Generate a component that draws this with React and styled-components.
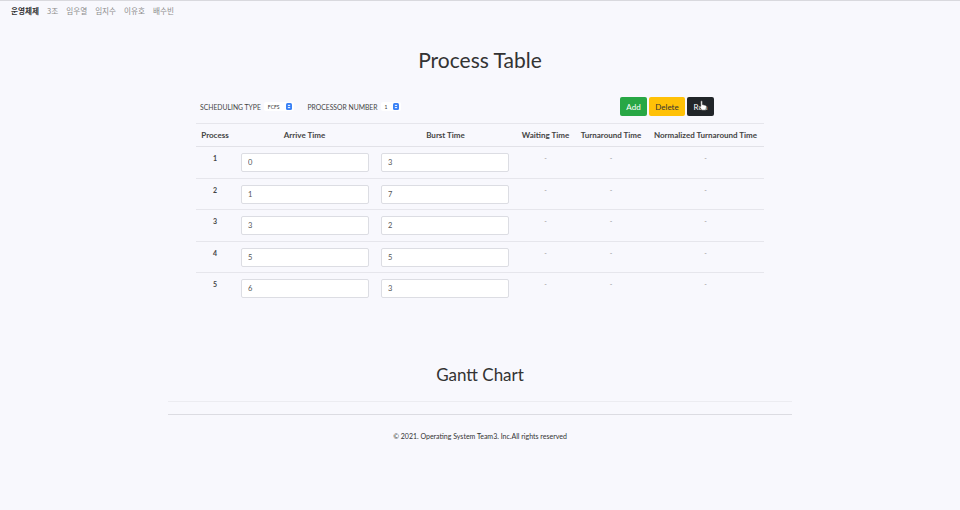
import React from "react";
import styled, { createGlobalStyle } from "styled-components";

const Global = createGlobalStyle`
  html, body { margin: 0; padding: 0; background: #f8f8fd; }
  body { font-family: Lato, "Noto Sans", "Noto Sans CJK KR", sans-serif; color: #333; }
  * { box-sizing: border-box; }
`;

const Page = styled.div`
  width: 960px;
  min-height: 510px;
  border-top: 1px solid #d9d9de;
  display: flex;
  flex-direction: column;
  align-items: center;
`;

const Nav = styled.nav`
  align-self: stretch;
  display: flex;
  gap: 8px;
  padding: 4px 0 0 11px;
  height: 20px;
  font-family: "Noto Sans CJK KR", sans-serif;
  font-size: 7.6px;
  line-height: 12px;
`;

const NavItem = styled.span`
  color: ${(p) => (p.$brand ? "#333" : "#8c8c8c")};
  font-weight: ${(p) => (p.$brand ? 700 : 400)};
`;

const Title = styled.h1`
  margin: 24px 0 0;
  font-size: 21px;
  line-height: 30px;
  font-weight: 400;
  color: #333;
`;

const Section = styled.section`
  width: 568px;
  display: flex;
  flex-direction: column;
`;

const Controls = styled.div`
  margin-top: 22px;
  height: 26px;
  display: flex;
  align-items: center;
  justify-content: space-between;
  padding: 0 50px 7px 4px;
`;

const Group = styled.div`
  display: flex;
  align-items: center;
`;

const Label = styled.span`
  font-size: 6.8px;
  color: #444;
  text-transform: uppercase;
  margin-right: 3px;
  margin-left: ${(p) => p.$ml || 0}px;
`;

const SelectBox = styled.div`
  height: 9px;
  display: flex;
  align-items: center;
  gap: ${(p) => p.$gap}px;
  background: #fff;
  border-radius: 2px;
  padding: 0 2px 0 4px;
  font-size: 5px;
  color: #333;
`;

const Spin = styled.span`
  width: 6px;
  height: 7px;
  background: #3b82f6;
  border-radius: 1.5px;
  display: flex;
  align-items: center;
  justify-content: center;
`;

const Buttons = styled.div`
  display: flex;
  gap: 2px;
`;

const Button = styled.button`
  height: 19px;
  width: ${(p) => p.$w}px;
  padding: 0;
  border: none;
  border-radius: 2px;
  font-family: inherit;
  font-size: 8px;
  background: ${(p) => p.$bg};
  color: ${(p) => p.$fg};
  cursor: pointer;
  position: relative;
`;

const Cursor = styled.svg`
  position: absolute;
  left: 12px;
  top: 3px;
`;

const Table = styled.table`
  width: 568px;
  border-collapse: collapse;
  table-layout: fixed;
`;

const Th = styled.th`
  height: 23px;
  border-top: 1px solid #e6e6ec;
  border-bottom: 1px solid #e2e2e8;
  font-size: 8px;
  font-weight: 700;
  color: #444;
  text-align: center;
  padding: 0;
  white-space: nowrap;
`;

const Td = styled.td`
  border-top: ${(p) => (p.$first ? "none" : "1px solid #e6e6ec")};
  padding: 6px 0 5.6px;
  vertical-align: top;
  text-align: center;
  font-size: 7px;
  line-height: 10px;
  font-weight: ${(p) => (p.$bold ? 700 : 400)};
  color: ${(p) => (p.$muted ? "#999" : "#444")};
`;

const Input = styled.input`
  display: block;
  width: 128px;
  height: 19px;
  margin: 0;
  margin-left: ${(p) => (p.$left ? 7 : 6)}px;
  border: 1px solid #dcdde3;
  border-radius: 2px;
  background: #fff;
  padding: 0 6px;
  font-family: inherit;
  font-size: 7.5px;
  color: #555;
  outline: none;
`;

const Gantt = styled.h2`
  margin: 59px 0 0;
  font-size: 17px;
  line-height: 24px;
  font-weight: 400;
  color: #333;
`;

const Rule = styled.div`
  width: 624px;
  height: 1px;
  background: ${(p) => p.$c};
  margin-top: ${(p) => p.$mt}px;
`;

const Footer = styled.footer`
  margin-top: 17px;
  font-size: 7px;
  color: #333;
`;

const rows = [
  [1, 0, 3],
  [2, 1, 7],
  [3, 3, 2],
  [4, 5, 5],
  [5, 6, 3],
];

const cols = [38, 141, 141, 59, 72, 117];

function Arrows() {
  return (
    <svg width="4" height="5" viewBox="0 0 4 5">
      <path d="M0.5 2 L2 0.6 L3.5 2 Z M0.5 3 L2 4.4 L3.5 3 Z" fill="#fff" />
    </svg>
  );
}

export default function App() {
  return (
    <>
      <Global />
      <Page>
        <Nav>
          <NavItem $brand>운영체제</NavItem>
          <NavItem>3조</NavItem>
          <NavItem>임우열</NavItem>
          <NavItem>임지수</NavItem>
          <NavItem>이유호</NavItem>
          <NavItem>배수빈</NavItem>
        </Nav>
        <Title>Process Table</Title>
        <Section>
          <Controls>
            <Group>
              <Label>Scheduling Type</Label>
              <SelectBox $gap={7}>
                FCFS
                <Spin>
                  <Arrows />
                </Spin>
              </SelectBox>
              <Label $ml={13}>Processor Number</Label>
              <SelectBox $gap={6}>
                1
                <Spin>
                  <Arrows />
                </Spin>
              </SelectBox>
            </Group>
            <Buttons>
              <Button $bg="#28a745" $fg="#fff" $w={27}>Add</Button>
              <Button $bg="#ffc107" $fg="#333" $w={36}>Delete</Button>
              <Button $bg="#212529" $fg="#fff" $w={27}>
                Run
                <Cursor width="9" height="11" viewBox="0 0 9 11">
                  <path
                    d="M2.5 0.8 C3.2 0.8 3.4 1.3 3.4 1.8 L3.4 4.6 L6.2 5.3 C7.2 5.6 7.6 6.2 7.4 7.2 L6.8 10.2 L2.8 10.2 L0.8 7.2 C0.4 6.5 1.2 5.8 1.8 6.4 L1.7 1.8 C1.7 1.2 2 0.8 2.5 0.8 Z"
                    fill="#fff"
                    stroke="#222"
                    strokeWidth="0.5"
                  />
                </Cursor>
              </Button>
            </Buttons>
          </Controls>
          <Table>
            <colgroup>
              {cols.map((w, i) => (
                <col key={i} style={{ width: w }} />
              ))}
            </colgroup>
            <thead>
              <tr>
                <Th>Process</Th>
                <Th>Arrive Time</Th>
                <Th>Burst Time</Th>
                <Th>Waiting Time</Th>
                <Th>Turnaround Time</Th>
                <Th>Normalized Turnaround Time</Th>
              </tr>
            </thead>
            <tbody>
              {rows.map(([p, a, b], i) => (
                <tr key={p}>
                  <Td $first={i === 0} $bold>{p}</Td>
                  <Td $first={i === 0}>
                    <Input $left defaultValue={a} />
                  </Td>
                  <Td $first={i === 0}>
                    <Input defaultValue={b} />
                  </Td>
                  <Td $first={i === 0} $muted>-</Td>
                  <Td $first={i === 0} $muted>-</Td>
                  <Td $first={i === 0} $muted>-</Td>
                </tr>
              ))}
            </tbody>
          </Table>
        </Section>
        <Gantt>Gantt Chart</Gantt>
        <Rule $c="#ececf1" $mt={14} />
        <Rule $c="#dcdce2" $mt={12} />
        <Footer>© 2021. Operating System Team3. Inc.All rights reserved</Footer>
      </Page>
    </>
  );
}
